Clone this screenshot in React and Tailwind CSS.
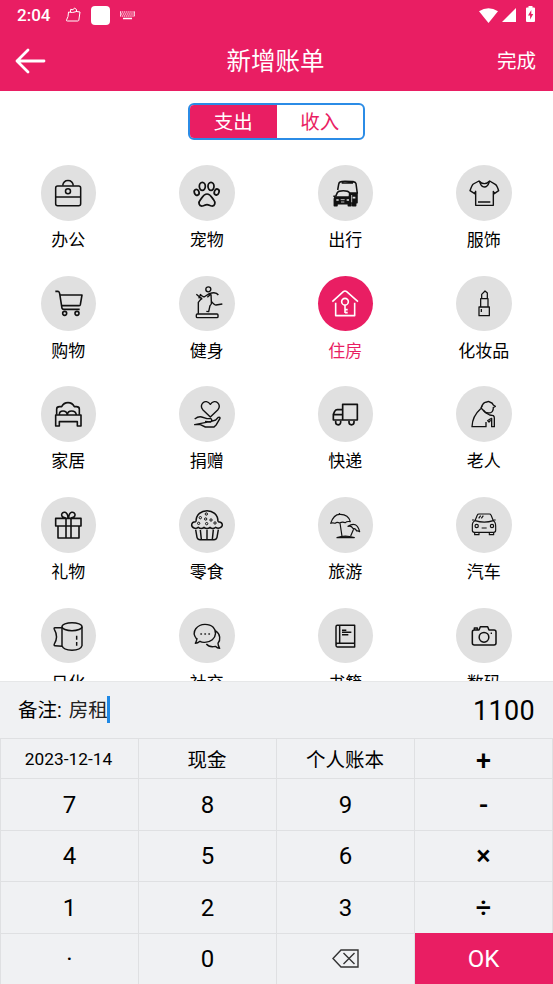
import { useState } from 'react'

const icons = {
  office: (
    <>
      <rect x="11" y="27" width="75" height="59" rx="6" />
      <path d="M32 26c3-21 29-21 32 0M11 60h75" />
      <circle cx="48" cy="43" r="7.5" />
    </>
  ),
  pet: (
    <>
      <ellipse cx="34" cy="28" rx="9" ry="12" />
      <ellipse cx="60" cy="28" rx="9" ry="12" />
      <ellipse cx="17" cy="46" rx="7" ry="9" transform="rotate(-20 17 46)" />
      <ellipse cx="77" cy="45" rx="7" ry="9" transform="rotate(20 77 45)" />
      <path d="M48 51c-11 0-13 9-19 16-9 10-5 21 5 20 6 0 8-4 14-4s8 4 14 4c10 1 13-10 5-20-6-7-8-16-19-16Z" />
    </>
  ),
  transit: (
    <>
      <path d="M26 39l3-17c1-7 4-9 19-9 22 0 32 0 33 7l4 30M38 18h34" />
      <path d="M62 48h22v29h-4v9h-9v-9h-6V66l-4-6Z" fill="currentColor" />
      <path d="M20 58l5-11c4-8 32-8 36 0l5 11M13 58h6M64 58h5" />
      <path d="M18 60h46l2 6v20h-8v-6H24v6h-8V66Z" fill="currentColor" />
      <path d="M22 69h7M53 69h7M71 62h8" stroke="#e0e0e0" strokeWidth="5" />
      <path d="M35 68h12M36 75h10M68 54v22" stroke="#e0e0e0" strokeWidth="2.5" />
    </>
  ),
  clothes: (
    <>
      <path d="M33 12L16 21Q12 24 6 41l14 9 3-7v42h53V43l3 7 13-9q-5-15-9-18L65 12Q58 20 49 20T33 12Z" />
      <path d="M35 14q4 16 14 16t15-16M30 75h37" />
    </>
  ),
  shopping: (
    <>
      <path d="M10 13h8q4 1 5 7l7 44q1 3 5 3h48M23 24h67l-5 29q-1 3-5 3H30" />
      <circle cx="38" cy="79" r="6" />
      <circle cx="75" cy="79" r="6" />
    </>
  ),
  fitness: (
    <>
      <circle cx="52" cy="7" r="7.5" />
      <rect x="16" y="81" width="65" height="11" rx="3" />
      <path d="M22 80V46l11-14M16 22l18 15M23 34l7-13M26 23l13 7 16-10q20-7 27 4M60 21l-11 10M60 22l1 21q2 8-4 13l-4 18-7-1M61 43q9 11 14 11l19-3" />
    </>
  ),
  housing: (
    <>
      <path d="M10 44L43 14q5-4 10 0l34 30M20 47v39h57V47M48 54v24M48 68h8M48 77h8" />
      <circle cx="48" cy="44" r="10" />
    </>
  ),
  makeup: (
    <>
      <path d="M38 58V35h22v23M41 35V22l10-10 7 6v17M33 60h31v26H33ZM40 66v9" />
    </>
  ),
  home: (
    <>
      <path d="M14 50V33q0-7 9-7h6q6-12 19-12t19 12h6q9 0 9 7v17" />
      <path d="M22 50q0-11 11-11t13 11q1-11 13-11t14 11M11 51h76v33H76V71H22v13H11Z" />
    </>
  ),
  donate: (
    <>
      <path d="M58 57L36 36C21 20 44-1 58 19 72-1 95 20 80 36Z" />
      <path d="M11 63q12-9 21-6l16 5h12q5 5-1 10l-17-2M61 70l13-4 8-8q6-1 5 3L76 80l-7 7H43L28 80H11Z" />
    </>
  ),
  delivery: (
    <>
      <path d="M41 19h44v47H41ZM41 35H25q-5 0-8 5l-4 9v17h28M13 50h27" />
      <path d="M20 68v5a7 7 0 0 0 15 0v-5M60 68v5a7 7 0 0 0 15 0v-5" />
    </>
  ),
  elder: (
    <>
      <path d="M40 29C43 18 49 12 57 12q4-3 8 0 9 2 11 9l6 4-6 3q1 17-15 17-11 0-15-9" />
      <path d="M42 23l-3 7 15 15 11 6 11 2q3 2 3 7v26h-8V61l-10 5M38 32Q13 54 12 86h42V72M58 67l5 5 5-5" />
    </>
  ),
  gift: (
    <>
      <path d="M11 28h76v23H11ZM18 51h63v36H18ZM42 28v59M57 28v59M42 27C23 27 27 7 39 10q8 2 9 16M56 27C75 27 71 7 59 10q-8 2-9 16" />
    </>
  ),
  snack: (
    <>
      <path d="M15 38C15-6 81-6 81 38M15 38C0 37-2 53 9 57q8 3 13-2 8 7 17 0 9 7 18 0 8 7 17 0 7 5 14 1C98 50 95 38 81 38M14 62l4 23q2 7 9 7h42q7 0 9-7l4-23M28 63l3 28M48 62v29M67 62l-3 29" />
      <g strokeWidth="3">
        <circle cx="46" cy="15" r="3.5" />
        <circle cx="28" cy="26" r="3.5" />
        <circle cx="44" cy="30" r="3.5" />
        <circle cx="60" cy="33" r="3.5" />
        <circle cx="23" cy="43" r="3.5" />
        <circle cx="47" cy="44" r="3.5" />
        <circle cx="72" cy="42" r="3.5" />
      </g>
    </>
  ),
  travel: (
    <>
      <path d="M5 43Q14 16 32 16q26-1 32 22-10-2-15 3-9-4-17 1-8-4-14 1-7-3-13 0ZM31 12v4M33 42l6 40M57 52q26-17 35 16-4-3-9-2-3-8-11-8-5-8-15-6ZM74 60l-9 21" />
      <path d="M24 86q24-9 52 0Z" fill="currentColor" />
    </>
  ),
  car: (
    <>
      <path d="M21 35l7-17q1-3 5-3h31q4 0 5 3l7 17q-27 9-55 0ZM21 35q-9 4-8 17v12q0 6 6 6h58q6 0 6-6V52q0-13-7-17M12 33h7M77 33h6M20 71v6h13v-6M64 71v6h13v-6M41 57h15M32 28l6-8M40 28l6-8" />
      <circle cx="26" cy="51" r="5" />
      <circle cx="72" cy="51" r="5" />
    </>
  ),
  daily: (
    <>
      <ellipse cx="60" cy="20" rx="30" ry="12" />
      <path d="M30 20v57c5 18 55 18 60 0V20M30 23H9q-4 0-2 5 13 22 0 44-2 5 2 5l21 2M74 47v12M74 66v11" />
    </>
  ),
  social: (
    <>
      <path d="M16 56C-1 34 20 13 42 13c45 0 40 56-3 54q-7 0-12-3-7 6-14 6 4-7 5-14Z" />
      <path d="M73 32c16 10 16 29 8 38q0 7 5 15-7 0-13-6-18 4-27-7" />
      <path d="M30 42h1M42 42h1M54 42h1" strokeWidth="5" strokeLinecap="round" />
    </>
  ),
  book: (
    <>
      <path d="M25 16h52v65H25q-4 0-4-5V20q0-4 4-4ZM32 16v54M77 70H26q-5 0-5 5M39 31h13M39 37h28M39 44h19" />
    </>
  ),
  camera: (
    <>
      <path d="M33 30l4-10h22l4 10h15q6 0 6 6v33q0 6-6 6H19q-6 0-6-6V36q0-6 6-6ZM19 28v-4h9v4M68 40h4" />
      <circle cx="48" cy="52" r="14.5" />
    </>
  ),
}

const categories = [
  { icon: 'office', label: '办公', width: 4.6 },
  { icon: 'pet', label: '宠物', width: 5.2 },
  { icon: 'transit', label: '出行', width: 4.6 },
  { icon: 'clothes', label: '服饰', width: 4.2 },
  { icon: 'shopping', label: '购物', width: 4.8 },
  { icon: 'fitness', label: '健身', width: 4.2 },
  { icon: 'housing', label: '住房', width: 4.8 },
  { icon: 'makeup', label: '化妆品', width: 3.8 },
  { icon: 'home', label: '家居', width: 4.8 },
  { icon: 'donate', label: '捐赠', width: 4.2 },
  { icon: 'delivery', label: '快递', width: 5 },
  { icon: 'elder', label: '老人', width: 4 },
  { icon: 'gift', label: '礼物', width: 4.8 },
  { icon: 'snack', label: '零食', width: 4.4 },
  { icon: 'travel', label: '旅游', width: 3.5 },
  { icon: 'car', label: '汽车', width: 3.5 },
  { icon: 'daily', label: '日化', width: 4.4 },
  { icon: 'social', label: '社交', width: 4.2 },
  { icon: 'book', label: '书籍', width: 4.4 },
  { icon: 'camera', label: '数码', width: 4.6 },
]

const keys = ['7', '8', '9', '-', '4', '5', '6', '×', '1', '2', '3', '÷', '·', '0', 'del', 'OK']

function StatusBar() {
  return (
    <div className="flex h-[30px] items-center px-[17px]">
      <span className="w-[34px] text-[17px] leading-none font-medium">2:04</span>
      <svg className="ml-[14px] h-4 w-4" viewBox="0 0 16 16" fill="none" stroke="currentColor" strokeWidth="1">
        <path d="M3.500 5q4 1.300 8-.5l3.500.5-1.200 8.300q-.3.700-1 .7H2.500q-1.500 0-.9-1.100Q3.500 10 3.500 5ZM5.500 5L5.700 2.300l2.300.5L9.500 1l2 1.500V5" />
      </svg>
      <span className="ml-[10px] h-[19px] w-[19px] rounded-[4px] bg-white" />
      <svg className="ml-[10px] h-[9px] w-[15px]" viewBox="0 0 15 9" fill="none" stroke="currentColor">
        <path d="M0 1h15M1 3h13M0 5h15" strokeWidth="1.200" strokeDasharray="1.200 .7" />
        <path d="M.5.5v4.500M14.500.5v4.500" strokeWidth=".7" />
        <path d="M3 7.500h9" strokeWidth="1.500" />
      </svg>
      <div className="ml-auto flex items-center">
        <svg className="h-[15px] w-[19px]" viewBox="0 0 19 15" fill="currentColor">
          <path d="M0 3.200Q9.500-2.500 19 3.200L9.500 15Z" />
        </svg>
        <svg className="ml-[4px] h-[14px] w-[14px]" viewBox="0 0 14 14" fill="currentColor">
          <path d="M14 0v14H0Z" />
        </svg>
        <svg className="mr-[1px] ml-[10px] h-[16px] w-[9px] -translate-y-px" viewBox="0 0 9 16">
          <path d="M2.500 0h4v1.500H8q1 0 1 1V15q0 1-1 1H1q-1 0-1-1V2.500q0-1 1-1h1.500Z" fill="currentColor" />
          <path d="M5.300 4L2 9.500h2.100V13.500L7.200 8H5.300Z" fill="#e91e63" />
        </svg>
      </div>
    </div>
  )
}

function Category({ item, active, onSelect }) {
  return (
    <button onClick={onSelect} className="flex h-[110.7px] flex-col items-center">
      <span
        className={`flex h-[55.5px] w-[55.5px] items-center justify-center rounded-full ${
          active ? 'bg-[#e91e63] text-white' : 'bg-[#e0e0e0] text-[#111]'
        }`}
      >
        <svg
          className="h-8 w-8 overflow-visible"
          viewBox="0 0 96 96"
          fill="none"
          stroke="currentColor"
          strokeWidth={item.width}
          strokeLinejoin="round"
        >
          {icons[item.icon]}
        </svg>
      </span>
      <span className={`mt-[7.500px] text-[17px] leading-6 ${active ? 'text-[#e91e63]' : 'text-black'}`}>{item.label}</span>
    </button>
  )
}

function KeyLabel({ value }) {
  if (value === 'del') {
    return (
      <svg className="-mt-[2px] h-[19px] w-[27px]" viewBox="0 0 27 19" fill="none" stroke="#333" strokeWidth="1.400">
        <path d="M9 1h17v17H9L1 9.500ZM11.500 4l11 11M22.500 4l-11 11" />
      </svg>
    )
  }
  return value
}

export default function App() {
  const [selected, setSelected] = useState('housing')

  return (
    <div className="flex h-[984px] w-[553px] flex-col overflow-hidden bg-white font-[Roboto,'Noto_Sans_CJK_SC',sans-serif] text-black">
      <header className="h-[91px] shrink-0 bg-[#e91e63] text-white">
        <StatusBar />
        <div className="grid h-[61px] grid-cols-3 items-center pr-[17px] pl-[15px]">
          <svg className="h-[26px] w-[31px]" viewBox="0 0 31 26" fill="none" stroke="currentColor" strokeWidth="2.800" strokeLinecap="round" strokeLinejoin="round">
            <path d="M13 2L2 13l11 11M2 13h27" />
          </svg>
          <h1 className="pt-[3px] text-center text-[24.5px] leading-9">新增账单</h1>
          <span className="pt-[2px] text-right text-[19.5px]">完成</span>
        </div>
      </header>

      <main className="flex min-h-0 flex-1 flex-col overflow-hidden">
        <div className="mx-auto mt-[12px] flex h-[37px] w-[177px] shrink-0 overflow-hidden rounded-[6px] border-2 border-[#2b8ce6] text-[19.5px]">
          <button className="flex-1 bg-[#e91e63] pt-[2px] text-white">支出</button>
          <button className="flex-1 pt-[2px] text-[#e91e63]">收入</button>
        </div>
        <div className="mt-[25px] -ml-px grid grid-cols-4">
          {categories.map((item) => (
            <Category
              key={item.icon}
              item={item}
              active={selected === item.icon}
              onSelect={() => setSelected(item.icon)}
            />
          ))}
        </div>
      </main>

      <section className="h-[303px] shrink-0 border-t border-[#e6e7e8] bg-[#f0f1f3]">
        <div className="flex h-[56px] items-center justify-between pt-[2px] pr-[18px] pl-[18px]">
          <div className="flex items-center text-[19.5px]">
            <span>备注:</span>
            <span className="ml-[7px] text-[#222]">房租</span>
            <span className="-mt-[3px] -ml-px h-[27px] w-[3px] bg-[#1e88e5]" />
          </div>
          <span className="text-[27px] tracking-[0.3px]">1100</span>
        </div>
        <div className="grid h-[40px] grid-cols-4 border-l border-[#dfe0e2] text-[19.5px]">
          <div className="flex items-center justify-center border-t border-r border-[#dfe0e2] pr-[2px] text-[17.3px]">2023-12-14</div>
          <div className="flex items-center justify-center border-t border-r border-[#dfe0e2] pr-px">现金</div>
          <div className="flex items-center justify-center border-t border-r border-[#dfe0e2] pr-px">个人账本</div>
          <div className="flex items-center justify-center border-t border-r border-[#dfe0e2] pt-[2px] text-[27px] font-medium">+</div>
        </div>
        <div className="grid h-[206px] grid-cols-4 grid-rows-4 border-l border-[#dfe0e2] text-[24px]">
          {keys.map((key, i) => (
            <button
              key={key}
              className={`flex items-center justify-center border-t border-r pt-px ${
                key === 'OK' ? 'border-[#e91e63] bg-[#e91e63] text-white' : 'border-[#dfe0e2]'
              } ${i % 4 === 3 && key !== 'OK' ? 'text-[27px] font-medium' : ''}`}
            >
              <KeyLabel value={key} />
            </button>
          ))}
        </div>
      </section>
    </div>
  )
}
